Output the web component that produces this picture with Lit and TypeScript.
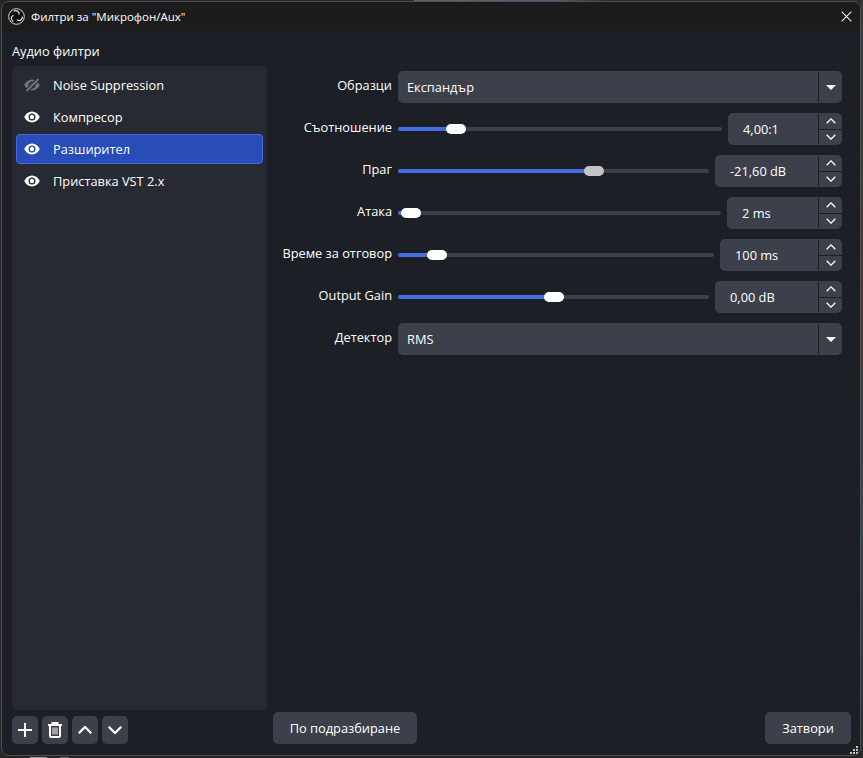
import { LitElement, css, html, svg } from "lit";
import { customElement } from "lit/decorators.js";

const eye = html`<svg width="16" height="12" viewBox="0 0 16 12"><path fill="#fff" fill-rule="evenodd" d="M8 .6C4.600 .6 1.800 2.800.2 6c1.600 3.200 4.400 5.400 7.800 5.400s6.200-2.200 7.800-5.400C14.200 2.800 11.400 .6 8 .6zM8 2.500a3.500 3.500 0 1 0 0 7a3.500 3.500 0 1 0 0-7z"/><circle cx="8" cy="6" r="2.200" fill="#fff"/></svg>`;

const eyeOff = html`<svg width="16" height="14" viewBox="0 0 16 14">
  <path fill="#757575" fill-rule="evenodd" d="M8 1.600C4.600 1.600 1.800 3.800.2 7c1.600 3.200 4.400 5.400 7.800 5.400s6.200-2.200 7.800-5.400C14.200 3.800 11.400 1.600 8 1.600zM8 3.500a3.500 3.500 0 1 0 0 7a3.500 3.500 0 1 0 0-7z"/>
  <circle cx="8" cy="7" r="2.200" fill="#757575"/>
  <path stroke="#272a33" stroke-width="4" d="M2 13.500L15 .5"/>
  <path stroke="#757575" stroke-width="2" d="M2.500 13L14.500 1"/>
</svg>`;

const chevron = (up: boolean, w: number, h: number, sw: number) => html`<svg width=${w} height=${h} viewBox="0 0 ${w} ${h}" fill="none" stroke="#fff" stroke-width=${sw}>${svg`<path d=${up ? `M.7 ${h - 0.7}L${w / 2} .9L${w - 0.7} ${h - 0.7}` : `M.7 .7L${w / 2} ${h - 0.9}L${w - 0.7} .7`} />`}</svg>`;

const filters = [
  { name: "Noise Suppression", on: false },
  { name: "Компресор", on: true },
  { name: "Разширител", on: true, selected: true },
  { name: "Приставка VST 2.x", on: true },
];

const rows: any[] = [
  { label: "Образци", combo: "Експандър" },
  { label: "Съотношение", value: "4,00:1", spin: 114, thumb: 48 },
  { label: "Праг", value: "-21,60 dB", spin: 127, thumb: 186, dim: true },
  { label: "Атака", value: "2 ms", spin: 115, thumb: 3 },
  { label: "Време за отговор", value: "100 ms", spin: 122, thumb: 29 },
  { label: "Output Gain", value: "0,00 dB", spin: 127, thumb: 146 },
  { label: "Детектор", combo: "RMS" },
];

@customElement("app-root")
export class AppRoot extends LitElement {
  static styles = css`
    :host {
      display: block;
      width: 863px;
      height: 758px;
      overflow: hidden;
      background:
        linear-gradient(90deg, #252525 0 48%, #6b6360 48% 52%, #50657c 58% 64%, #2e2e2e 70%) top / 100% 1px no-repeat,
        linear-gradient(90deg, #252525 0 3.5%, #9a9a9a 3.5% 5.5%, #252525 5.5% 7%, #6a6a6a 7% 8%, #252525 8%) bottom / 100% 1px no-repeat,
        linear-gradient(180deg, #333f3a, #4c3734 40%, #37494b 70%, #2b2b2b) right / 2px 100% no-repeat,
        #262626;
      font-family: "Open Sans", "Noto Sans", sans-serif;
      font-size: 12.8px;
      color: #fff;
    }

    .win {
      box-sizing: border-box;
      width: 860px;
      height: 755px;
      margin: 1px 2px 2px 1px;
      border: 1px solid #4c4f55;
      border-radius: 8px;
      overflow: hidden;
      background: #1d1f26;
      display: flex;
      flex-direction: column;
      position: relative;
    }

    .title {
      height: 29px;
      flex: none;
      background: #1c1c1c;
      display: flex;
      align-items: center;
      padding: 0 8px 0 6px;
      gap: 6px;
      font-size: 11.5px;
    }
    .title .text { flex: 1; }

    .body {
      flex: 1;
      min-height: 0;
      display: grid;
      grid-template-columns: 255px 1fr;
      gap: 6px;
      padding: 12px 9px 11px 10px;
    }

    .left, .right {
      display: flex;
      flex-direction: column;
      min-height: 0;
    }

    .caption {
      line-height: 16px;
      margin-bottom: 7px;
    }

    .list {
      flex: 1;
      background: #272a33;
      border-radius: 5px;
      padding: 4px;
      display: flex;
      flex-direction: column;
      gap: 2px;
    }

    .item {
      box-sizing: border-box;
      height: 30px;
      display: flex;
      align-items: center;
      border: 1px solid transparent;
      border-radius: 4px;
      padding-left: 7px;
    }
    .item.selected {
      background: #284cb8;
      border-color: #476be0;
    }
    .item .icon {
      width: 16px;
      display: flex;
      justify-content: center;
      margin-right: 13px;
    }

    .tools {
      display: flex;
      gap: 4px;
      margin-top: 6px;
    }
    .tool {
      width: 26px;
      height: 28px;
      background: #3c404b;
      border-radius: 5px;
      display: flex;
      align-items: center;
      justify-content: center;
    }

    .form {
      flex: 1;
      padding: 28px 9px 0 0;
      display: flex;
      flex-direction: column;
      gap: 10px;
    }
    .row {
      display: grid;
      grid-template-columns: 119px 1fr;
      gap: 6px;
      height: 32px;
      align-items: center;
    }
    .label {
      text-align: right;
      padding-bottom: 4px;
      white-space: nowrap;
    }
    .field {
      display: flex;
      align-items: center;
      height: 32px;
    }

    .combo, .spin {
      box-sizing: border-box;
      height: 32px;
      background: #3c404b;
      border-radius: 5px;
      display: flex;
      align-items: stretch;
    }
    .combo { flex: 1; }
    .spin { flex: none; }
    .combo .val, .spin .val {
      flex: 1;
      display: flex;
      align-items: center;
      white-space: nowrap;
    }
    .combo .val { padding-left: 9px; }
    .spin .val { padding-left: 15px; }

    .side {
      box-sizing: border-box;
      width: 24px;
      flex: none;
      margin: 1px 0;
      border-left: 1px solid #1d1f26;
      display: flex;
      flex-direction: column;
    }
    .side.arrow {
      align-items: center;
      justify-content: center;
    }
    .tri {
      width: 0;
      height: 0;
      border-left: 5px solid transparent;
      border-right: 5px solid transparent;
      border-top: 5px solid #fff;
    }
    .step {
      flex: 1;
      display: flex;
      align-items: center;
      justify-content: center;
    }
    .step + .step { border-top: 1px solid #1d1f26; }

    .slider {
      flex: 1;
      margin-right: 6px;
      height: 4px;
      border-radius: 2px;
      background: #3c404b;
      position: relative;
    }
    .fill {
      height: 4px;
      border-radius: 2px;
      background: #476be0;
    }
    .thumb {
      position: absolute;
      top: -3px;
      width: 20px;
      height: 10px;
      border-radius: 5px;
      background: #fff;
    }
    .thumb.dim { background: #c4c4c6; }

    .footer {
      display: flex;
      justify-content: space-between;
    }
    .btn {
      height: 32px;
      box-sizing: border-box;
      background: #3c404b;
      border-radius: 5px;
      display: flex;
      align-items: center;
      justify-content: center;
    }
    .btn.reset { width: 144px; }
    .btn.close { width: 86px; }

    .grip {
      position: absolute;
      right: 1px;
      bottom: 0;
    }
  `;

  private renderField(r: any) {
    if (r.combo) {
      return html`<div class="combo">
        <div class="val">${r.combo}</div>
        <div class="side arrow"><div class="tri"></div></div>
      </div>`;
    }
    return html`
      <div class="slider">
        <div class="fill" style="width:${r.thumb + 6}px"></div>
        <div class="thumb ${r.dim ? "dim" : ""}" style="left:${r.thumb}px"></div>
      </div>
      <div class="spin" style="width:${r.spin}px">
        <div class="val">${r.value}</div>
        <div class="side">
          <div class="step">${chevron(true, 10, 6, 1.3)}</div>
          <div class="step">${chevron(false, 10, 6, 1.3)}</div>
        </div>
      </div>`;
  }

  render() {
    return html`
      <div class="win">
        <div class="title">
          <svg width="17" height="17" viewBox="0 0 17 17">
            <circle cx="8.500" cy="8.500" r="7.800" fill="#0c0c0c" stroke="#dcdcdc" stroke-width="1" />
            <g fill="none" stroke="#dcdcdc" stroke-width="1.200">
              <path d="M5.600 3.200C8.400 1.700 11.600 3.400 11 6.600" />
              <path transform="rotate(120 8.500 8.500)" d="M5.600 3.200C8.400 1.700 11.600 3.400 11 6.600" />
              <path transform="rotate(240 8.500 8.500)" d="M5.600 3.200C8.400 1.700 11.600 3.400 11 6.600" />
            </g>
          </svg>
          <div class="text">Филтри за "Микрофон/Aux"</div>
          <svg width="11" height="11" viewBox="0 0 11 11" stroke="#f0f0f0" stroke-width="1.100"><path d="M.6 .6L10.400 10.400M10.400 .6L.6 10.400" /></svg>
        </div>
        <div class="body">
          <div class="left">
            <div class="caption">Аудио филтри</div>
            <div class="list">
              ${filters.map(
                (f) => html`<div class="item ${f.selected ? "selected" : ""}">
                  <span class="icon">${f.on ? eye : eyeOff}</span>
                  <span>${f.name}</span>
                </div>`
              )}
            </div>
            <div class="tools">
              <div class="tool">
                <svg width="14" height="14" viewBox="0 0 14 14" stroke="#fff" stroke-width="2"><path d="M7 0V14M0 7H14" /></svg>
              </div>
              <div class="tool">
                <svg width="14" height="16" viewBox="0 0 14 16" fill="none" stroke="#fff">
                  <path stroke-width="2" d="M0 3H14M4.500 3V1H9.500V3" />
                  <path stroke-width="2" d="M2 3V13.500a1.500 1.500 0 0 0 1.500 1.500H10.500a1.500 1.500 0 0 0 1.500-1.500V3" />
                  <path stroke-width="1" d="M5 5.500V12.500M7 5.500V12.500M9 5.500V12.500" />
                </svg>
              </div>
              <div class="tool">${chevron(true, 14, 8, 2.2)}</div>
              <div class="tool">${chevron(false, 14, 8, 2.2)}</div>
            </div>
          </div>
          <div class="right">
            <div class="form">
              ${rows.map(
                (r) => html`<div class="row">
                  <div class="label">${r.label}</div>
                  <div class="field">${this.renderField(r)}</div>
                </div>`
              )}
            </div>
            <div class="footer">
              <div class="btn reset">По подразбиране</div>
              <div class="btn close">Затвори</div>
            </div>
          </div>
        </div>
        <svg class="grip" width="9" height="9" viewBox="0 0 9 9" fill="#c8c8c8">
          <path d="M6 0h2v2H6zM3 3h2v2H3zM6 3h2v2H6zM0 6h2v2H0zM3 6h2v2H3zM6 6h2v2H6z" />
        </svg>
      </div>
    `;
  }
}
